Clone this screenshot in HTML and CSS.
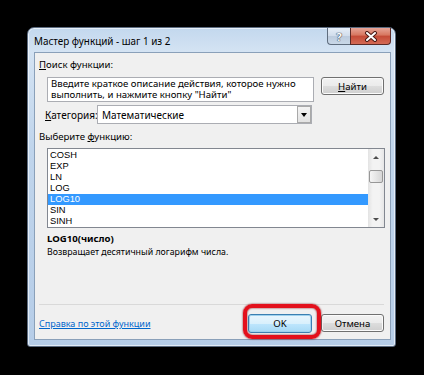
FILE: index.html
```html
<!DOCTYPE html>
<html lang="ru">

<head>
    <meta charset="UTF-8">
    <meta name="viewport" content="width=device-width, initial-scale=1.0">
    <title>Мастер функций</title>
    <link rel="stylesheet" href="styles.css">
</head>

<body>
    <div class="window">
        <div class="titlebar">
            <span class="title">Мастер функций - шаг 1 из 2</span>
            <div class="caption">
                <span class="cap help">?</span>
                <span class="cap close">
                    <svg width="14" height="11" viewBox="0 0 14 11">
                        <path d="M3 2 L11 9 M11 2 L3 9" stroke="#4a1a16" stroke-width="4" stroke-linecap="round" />
                        <path d="M3 2 L11 9 M11 2 L3 9" stroke="#ffffff" stroke-width="2" stroke-linecap="round" />
                    </svg>
                </span>
            </div>
        </div>
        <div class="client">
            <div class="label"><u>П</u>оиск функции:</div>
            <div class="search_row">
                <div class="textbox">Введите краткое описание действия, которое нужно выполнить, и нажмите кнопку "Найти"</div>
                <button class="btn find"><u>Н</u>айти</button>
            </div>
            <div class="cat_row">
                <span class="cat_label"><u>К</u>атегория:</span>
                <div class="combo">
                    <span>Математические</span>
                    <span class="drop"><i></i></span>
                </div>
            </div>
            <div class="label">Выберите <u>ф</u>ункцию:</div>
            <div class="listbox">
                <ul class="items">
                    <li>COSH</li>
                    <li>EXP</li>
                    <li>LN</li>
                    <li>LOG</li>
                    <li class="active">LOG10</li>
                    <li>SIN</li>
                    <li>SINH</li>
                </ul>
                <div class="scrollbar">
                    <span class="arrow up"></span>
                    <div class="track"><span class="thumb"></span></div>
                    <span class="arrow down"></span>
                </div>
            </div>
            <div class="sig">LOG10(число)</div>
            <div class="desc">Возвращает десятичный логарифм числа.</div>
            <div class="sep"></div>
            <div class="footer">
                <a href="javascript:;" class="help_link">Справка по этой функции</a>
                <div class="buttons">
                    <button class="btn default">OK</button>
                    <button class="btn">Отмена</button>
                </div>
            </div>
        </div>
    </div>
    <div class="ring"></div>
</body>

</html>
```

FILE: styles.css
```css
* {
    margin: 0;
    padding: 0;
    box-sizing: border-box;
}

body {
    width: 424px;
    height: 375px;
    overflow: hidden;
    background: #000;
    font-family: "Noto Sans", "Liberation Sans", sans-serif;
    font-size: 9.6px;
    color: #000;
    position: relative;
}

u {
    text-decoration: underline;
}

.window {
    margin: 27px 0 0 27px;
    width: 369px;
    height: 320px;
    padding: 0 4px 6px 6px;
    border: 1px solid #5b6b80;
    border-radius: 7px 7px 3px 3px;
    background: linear-gradient(#c3d8ee, #d4e3f3 24px, #c0d5ec 120px, #b6cde8);
    box-shadow: inset 0 0 0 1px rgba(255, 255, 255, 0.6);
}

.titlebar {
    height: 24px;
    display: flex;
    justify-content: space-between;
    align-items: flex-start;
}

.titlebar .title {
    padding-top: 7px;
    line-height: 13px;
    font-size: 9.9px;
}

.caption {
    display: flex;
}

.cap {
    height: 17px;
    display: flex;
    align-items: center;
    justify-content: center;
    border: 1px solid #5f6d7e;
    border-top: none;
}

.cap.help {
    width: 23px;
    border-right: none;
    border-radius: 0 0 0 4px;
    background: linear-gradient(#e6eef7, #d0dceb 50%, #bccbdd 51%, #c9d8e8);
    color: #fff;
    font-weight: bold;
    font-size: 11px;
    text-shadow: 0 0 1px #3d4b5c, 0 0 1px #3d4b5c, 0 0 1px #3d4b5c;
}

.cap.close {
    width: 41px;
    border-color: #5a2a26;
    border-radius: 0 0 4px 0;
    background: linear-gradient(#e7a597, #d7765f 45%, #c44a36 50%, #d46a55);
}

.client {
    height: 288px;
    padding: 0 6px 0 4px;
    background: #f0f0f0;
    border: 1px solid #8aa0b9;
}

.label {
    margin-top: 6px;
    line-height: 12px;
}

.search_row {
    margin-top: 6px;
    margin-left: 8px;
    display: flex;
    align-items: flex-start;
}

.textbox {
    width: 267px;
    height: 25px;
    padding: 1px 3px;
    line-height: 10.5px;
    font-size: 9.6px;
    background: #fff;
    border: 1px solid #abadb3;
}

.btn {
    height: 18px;
    width: 63px;
    font-family: inherit;
    font-size: 9.6px;
    color: #000;
    border: 1px solid #707070;
    border-radius: 3px;
    background: linear-gradient(#f2f2f2, #ebebeb 50%, #dddddd 51%, #cfcfcf);
    box-shadow: inset 0 0 0 1px #fbfbfb;
}

.btn.find {
    margin-left: 7px;
}

.btn.default {
    width: 64px;
    height: 19px;
    border-color: #3c7fb1;
    background: linear-gradient(#eaf6fd, #d9f0fc 50%, #bee6fd 51%, #a7d9f5);
    box-shadow: inset 0 0 0 1px #9fd2ee;
}

.cat_row {
    margin-top: 3px;
    display: flex;
    align-items: center;
}

.cat_label {
    margin-left: 6px;
    width: 52px;
    font-size: 10px;
}

.combo {
    width: 215px;
    height: 19px;
    display: flex;
    justify-content: space-between;
    align-items: center;
    padding-left: 4px;
    font-size: 10px;
    background: #fff;
    border: 1px solid #abadb3;
}

.combo .drop {
    width: 14px;
    height: 17px;
    display: flex;
    align-items: center;
    justify-content: center;
    border: 1px solid #a9a9a9;
    background: linear-gradient(#f4f4f4, #e2e2e2);
}

.combo .drop i {
    border-left: 3px solid transparent;
    border-right: 3px solid transparent;
    border-top: 4px solid #000;
}

.cat_row + .label {
    margin-top: 7px;
}

.listbox {
    margin: 5px 0 0 8px;
    width: 338px;
    height: 80px;
    display: flex;
    background: #fff;
    border: 1px solid #828790;
}

.items {
    flex: 1;
    list-style: none;
    padding-top: 1px;
    font-family: "Liberation Sans", sans-serif;
    font-size: 9.3px;
}

.items li {
    height: 11px;
    line-height: 11px;
    padding-left: 2px;
}

.items li.active {
    background: #3399ff;
    color: #fff;
}

.scrollbar {
    width: 16px;
    display: flex;
    flex-direction: column;
    background: linear-gradient(90deg, #e3e3e3, #f3f3f3 30%, #f3f3f3 70%, #e6e6e6);
}

.arrow {
    height: 16px;
    display: flex;
    align-items: center;
    justify-content: center;
}

.arrow::after {
    content: "";
    border-left: 3px solid transparent;
    border-right: 3px solid transparent;
}

.arrow.up::after {
    border-bottom: 3px solid #4d4d4d;
}

.arrow.down::after {
    border-top: 3px solid #4d4d4d;
}

.track {
    flex: 1;
    padding: 5px 1px 0;
}

.thumb {
    display: block;
    height: 13px;
    border: 1px solid #979797;
    border-radius: 2px;
    background: linear-gradient(90deg, #f5f5f5, #e6e6e6 50%, #d6d6d6);
}

.sig {
    margin: 5px 0 0 8px;
    line-height: 12px;
    font-weight: bold;
}

.desc {
    margin: 1px 0 0 8px;
    line-height: 12px;
    font-size: 8.8px;
}

.sep {
    margin-top: 46px;
    height: 1px;
    background: #d9d9d9;
}

.footer {
    margin-top: 9px;
    display: flex;
    justify-content: space-between;
    align-items: center;
}

.help_link {
    color: #0066cc;
    text-decoration: underline;
    font-size: 9px;
}

.buttons {
    display: flex;
    gap: 9px;
}

.ring {
    position: absolute;
    left: 243px;
    top: 304px;
    width: 78px;
    height: 35px;
    border: 4px solid #e3101c;
    border-radius: 9px;
    box-shadow: 0 0 2px #7a0008, inset 0 0 2px #7a0008;
}
```
